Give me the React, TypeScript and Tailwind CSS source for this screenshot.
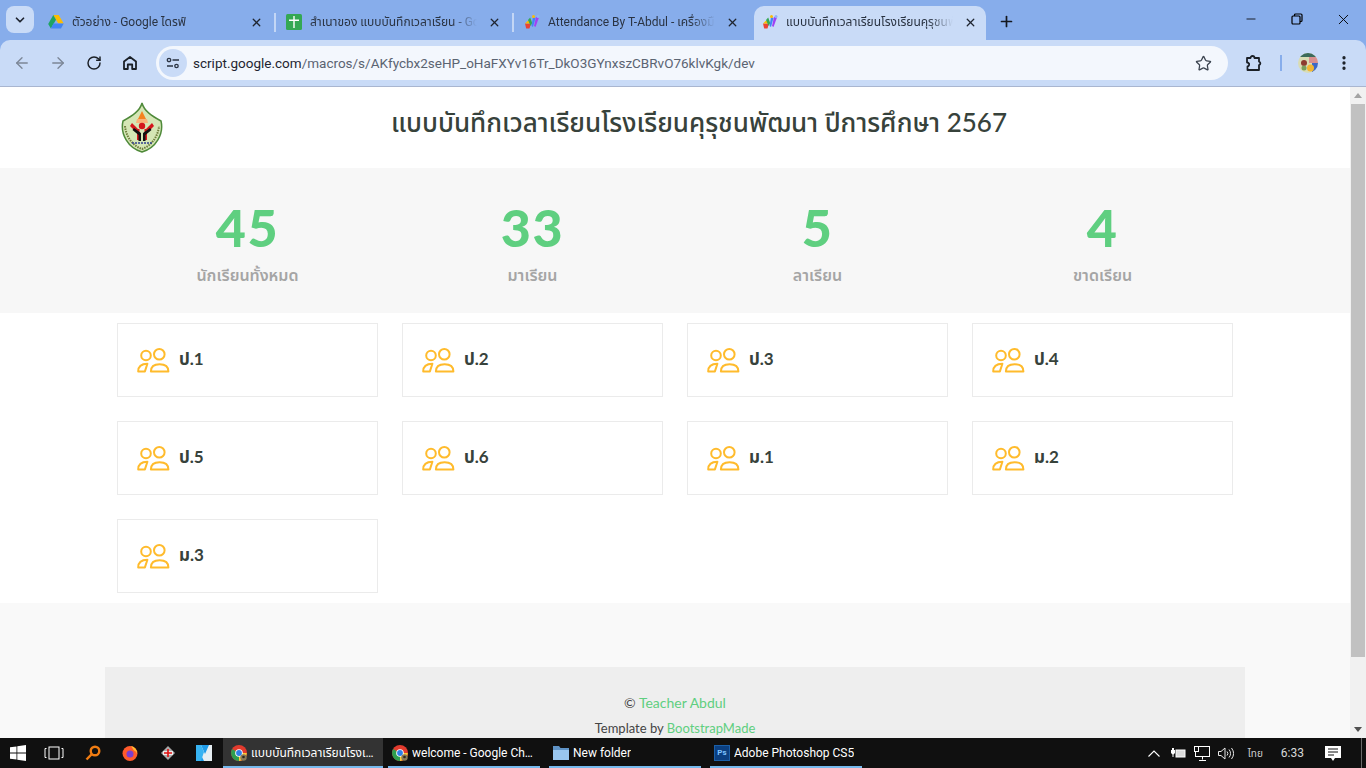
import { ArrowLeft, ArrowRight, RotateCw, Star, EllipsisVertical, Plus, X, ChevronDown, Minus } from 'lucide-react'

const UI_FONT = "font-['Roboto','Noto_Sans','Noto_Sans_Thai',sans-serif]"
const PAGE_FONT = "font-['Lato','Noto_Sans','Noto_Sans_Thai',sans-serif]"

function DriveIcon() {
  return (
    <svg width="16" height="16" viewBox="0 0 16 16">
      <path d="M5.300 1h5.400l5 8.600h-5.400z" fill="#fbbc04" />
      <path d="M5.300 1L0.200 10l2.700 4.600L8 5.700z" fill="#1fa463" />
      <path d="M5.400 9.600h10.300l-2.700 5H2.900z" fill="#4285f4" />
    </svg>
  )
}

function SheetIcon() {
  return (
    <svg width="16" height="16" viewBox="0 0 16 16">
      <rect width="16" height="16" rx="1.500" fill="#34a853" />
      <path d="M7.300 2h1.400v3.500H13v1.400H8.700V14H7.300V6.900H3V5.500h4.300z" fill="#fff" />
    </svg>
  )
}

function ScriptIcon() {
  return (
    <svg width="16" height="16" viewBox="0 0 16 16">
      <path d="M1 9.500h6l-1.500 5H2.200z" fill="#ea4335" />
      <path d="M1 9.500l3-3 3.500 3z" fill="#fbbc04" />
      <path d="M4 6l2.200-2.500 2 5.500-1.500 3z" fill="#34a853" />
      <path d="M9 3l2.500 1-2.500 9-1.500-1z" fill="#4285f4" />
      <path d="M12 3l3 .5-3.500 9.500-1.500-1z" fill="#a142f4" />
      <circle cx="9.500" cy="2.500" r="1.500" fill="#fbbc04" />
      <circle cx="14" cy="2.500" r="1.500" fill="#8ab4f8" />
    </svg>
  )
}

function ChromeIcon() {
  return (
    <svg width="16" height="16" viewBox="0 0 16 16">
      <circle cx="8" cy="8" r="8" fill="#e33b2e" />
      <path d="M8 8L1.100 4A8 8 0 0 0 8 16l3.500-6z" fill="#2e9e4f" />
      <path d="M8 8h7.800A8 8 0 0 1 8 16z" fill="#fcc934" />
      <circle cx="8" cy="8" r="3.800" fill="#fff" />
      <circle cx="8" cy="8" r="2.900" fill="#2f7fe6" />
      <circle cx="12.500" cy="12.500" r="3.200" fill="#8a7a55" />
      <circle cx="12.500" cy="12" r="1.300" fill="#2a2a20" />
    </svg>
  )
}

const tabs = [
  { title: 'ตัวอย่าง - Google ไดรฟ์', icon: <DriveIcon /> },
  { title: 'สำเนาของ แบบบันทึกเวลาเรียน - Google ชีต', icon: <SheetIcon /> },
  { title: 'Attendance By T-Abdul - เครื่องมือ', icon: <ScriptIcon /> },
  { title: 'แบบบันทึกเวลาเรียนโรงเรียนคุรุชนพัฒนา', icon: <ScriptIcon />, active: true },
]

function Tab({ title, icon, active, last }: { title: string; icon: React.ReactNode; active?: boolean; last?: boolean }) {
  return (
    <div className={`relative flex h-[34px] shrink-0 items-center pb-[2px] ${active ? 'ml-[2px] w-[232px] rounded-t-[10px] bg-[#c9dbf7] pl-[8px]' : 'w-[238px] pl-[10px]'}`}>
      <span className="shrink-0">{icon}</span>
      <span className="ml-2 min-w-0 flex-1 overflow-hidden whitespace-nowrap text-[12px] text-[#2a3342] [mask-image:linear-gradient(90deg,#000_85%,transparent)]">
        {title}
      </span>
      <X size={13} strokeWidth={2.400} className={`ml-[11px] shrink-0 text-[#1f2530] ${active ? 'mr-[9.500px]' : 'mr-[13.500px]'}`} />
      {!last && !active && <span className="absolute right-0 top-[7px] h-[19px] w-[2px] bg-[#c3d6f5]" />}
    </div>
  )
}

function TabStrip() {
  return (
    <div className={`flex h-10 items-end bg-[#87adeb] ${UI_FONT}`}>
      <div className="mb-[7px] ml-[6px] mr-[4px] flex h-[27px] w-[28px] items-center justify-center rounded-lg bg-[#c9dbf7]">
        <ChevronDown size={14} strokeWidth={3} className="text-[#1f2530]" />
      </div>
      {tabs.map((t, i) => (
        <Tab key={i} title={t.title} icon={t.icon} active={t.active} last={i === 2} />
      ))}
      <div className="mb-[10px] ml-[10px] flex w-5 items-center justify-center">
        <Plus size={17} strokeWidth={2.400} className="text-[#14181f]" />
      </div>
      <div className="ml-auto flex h-full items-center pb-[2px]">
        <div className="flex w-[46px] justify-center"><Minus size={14} strokeWidth={1.400} className="text-black" /></div>
        <div className="flex w-[46px] justify-center">
          <svg width="12" height="12" viewBox="0 0 12 12" fill="none" stroke="#000" strokeWidth="1.200">
            <rect x="1" y="3" width="8" height="8" rx="1" />
            <path d="M3.500 3V2a1 1 0 0 1 1-1H10a1 1 0 0 1 1 1v5.500a1 1 0 0 1-1 1H9" />
          </svg>
        </div>
        <div className="flex w-[46px] justify-center"><X size={17} strokeWidth={1.300} className="text-black" /></div>
      </div>
    </div>
  )
}

function Toolbar() {
  return (
    <div className="bg-[#87adeb]">
      <div className={`flex h-[47px] items-center rounded-t-[10px] border-b border-[#a9b6d0] bg-[#c9dbf7] ${UI_FONT}`}>
        <div className="flex w-[156px] items-center pl-[13px]">
          <ArrowLeft size={18} strokeWidth={1.800} className="text-[#7c8797]" />
          <ArrowRight size={18} strokeWidth={1.800} className="ml-[18px] text-[#7c8797]" />
          <RotateCw size={16} strokeWidth={2.200} className="ml-[19px] text-[#1b2027]" />
          <svg width="16" height="16" viewBox="0 0 16 16" fill="none" stroke="#1b2027" strokeWidth="1.800" className="ml-5">
            <path d="M2 14V6.500L8 2l6 4.500V14h-3.800V9.500H5.800V14z" strokeLinejoin="round" />
          </svg>
        </div>
        <div className="flex h-[34px] w-[1072px] items-center rounded-full bg-[#f3f7fd] pl-[3px] pr-4">
          <div className="flex h-7 w-7 items-center justify-center rounded-full bg-[#c9dbf7]">
            <svg width="14" height="12" viewBox="0 0 14 12" fill="none" stroke="#2a3342" strokeWidth="1.300">
              <circle cx="3" cy="3" r="1.700" />
              <path d="M6.500 3H13M1 9h6" />
              <circle cx="10.500" cy="9" r="1.700" />
            </svg>
          </div>
          <span className="ml-[6px] whitespace-nowrap pt-[1px] text-[13.500px] text-[#5b6472]">
            <span className="text-[#1f2530]">script.google.com</span>/macros/s/AKfycbx2seHP_oHaFXYv16Tr_DkO3GYnxszCBRvO76klvKgk/dev
          </span>
          <Star size={17} strokeWidth={1.800} className="ml-auto text-[#3c4450]" />
        </div>
        <svg width="18" height="18" viewBox="0 0 18 18" fill="none" stroke="#1b2027" strokeWidth="1.800" className="ml-[17px]" strokeLinejoin="round">
          <path d="M2 4h3.500a2 2 0 0 1 4 0H14v3.500a1.800 1.800 0 0 1 0 3.500v5H2.500v-3.500a2 2 0 0 0 1-3.500 2 2 0 0 0-1.500-.5z" />
        </svg>
        <span className="ml-[17px] h-[16px] w-[2px] bg-[#87adeb]" />
        <svg width="20" height="20" viewBox="0 0 20 20" className="ml-[16px]">
          <defs><clipPath id="av"><circle cx="10" cy="10" r="10" /></clipPath></defs>
          <g clipPath="url(#av)">
            <rect width="20" height="20" fill="#d9dcb4" />
            <rect width="20" height="4" fill="#3c6a5a" />
            <rect x="11" y="4" width="9" height="6" fill="#d98f8f" />
            <rect x="14" y="10" width="6" height="10" fill="#3c68c8" />
            <circle cx="12.500" cy="15" r="3.500" fill="#f2b632" />
            <circle cx="6" cy="10" r="3" fill="#8d3b2f" />
            <circle cx="6" cy="15" r="2.500" fill="#7ba05b" />
          </g>
        </svg>
        <EllipsisVertical size={18} strokeWidth={2.400} className="ml-[17px] text-[#1b2027]" />
      </div>
    </div>
  )
}

function SchoolLogo() {
  return (
    <svg width="44" height="52" viewBox="0 0 44 52">
      <path d="M22 1C24 9 32 14 41 19 44 32 36 46 22 50 8 46 0 32 3 19 12 14 20 9 22 1z" fill="#d5e6b5" stroke="#4f8a3a" strokeWidth="1.500" />
      <path d="M5 24C6 35 13 44 22 47 31 44 38 35 39 24" fill="none" stroke="#6f7d3c" strokeWidth="2" strokeDasharray="1.500 1" />
      <path d="M22 9l4 8h-8z" fill="#f58220" />
      <path d="M17 17h10l1 4H16z" fill="#f9b27a" />
      <circle cx="22" cy="24" r="3.200" fill="#d4161c" />
      <path d="M12 21l6 6h1.500v11H17V31l-7-7zM32 21l-6 6h-1.500v11H27V31l7-7z" fill="#d4161c" />
      <path d="M14 26l7 5v8h-2.500v-6l-6-5zM30 26l-7 5v8h2.500v-6l6-5z" fill="#111" />
      <path d="M12 41h20" stroke="#33418f" strokeWidth="1.400" strokeDasharray="2 1" />
    </svg>
  )
}

function Stat({ value, label }: { value: string; label: string }) {
  return (
    <div className="flex flex-col items-center">
      <span className="mt-[-2px] text-[52px] font-black leading-[60px] tracking-[1.500px] text-[#5fcf80]">{value}</span>
      <span className="mt-[3px] text-[16px] font-semibold leading-[30px] text-[#a5a5a5]">{label}</span>
    </div>
  )
}

function PeopleIcon() {
  return (
    <svg width="33" height="27" viewBox="0 0 33 27" fill="none" stroke="#ffbb2c" strokeWidth="2" strokeLinejoin="round" className="shrink-0">
      <circle cx="9" cy="8.500" r="4.800" />
      <circle cx="22.300" cy="7.200" r="5.300" />
      <path d="M1.200 24.400c0-4.500 3-7.700 9.200-7.700l-2.500 7.700z" />
      <path d="M13.900 24.400c0-4.700 3.400-7.200 8.700-7.200s8.800 2.500 8.800 7.200z" />
    </svg>
  )
}

const classes = ['ป.1', 'ป.2', 'ป.3', 'ป.4', 'ป.5', 'ป.6', 'ม.1', 'ม.2', 'ม.3']

function ClassCard({ name }: { name: string }) {
  return (
    <div className="flex h-[74px] items-center border border-[#ebebeb] bg-white pl-[19px]">
      <PeopleIcon />
      <span className="mb-[2px] ml-[9px] text-[17px] font-bold text-[#37423b]">{name}</span>
    </div>
  )
}

function Page() {
  return (
    <div className={`flex h-[651px] w-[1350px] flex-col overflow-hidden bg-[#f9f9f9] ${PAGE_FONT}`}>
      <header className="h-[81px] shrink-0 bg-white">
        <div className="mx-auto flex h-full w-[1116px] items-center">
          <div className="w-[50px] shrink-0 pl-[3px] pt-[1px]">
            <SchoolLogo />
          </div>
          <h1 className="mb-[10px] mr-[2px] flex-1 text-center text-[26px] font-medium text-[#37423b]">
            แบบบันทึกเวลาเรียนโรงเรียนคุรุชนพัฒนา ปีการศึกษา 2567
          </h1>
        </div>
      </header>
      <section className="h-[145px] shrink-0 bg-[#f7f7f7] pt-[31px]">
        <div className="mx-auto grid w-[1140px] grid-cols-4">
          <Stat value="45" label="นักเรียนทั้งหมด" />
          <Stat value="33" label="มาเรียน" />
          <Stat value="5" label="ลาเรียน" />
          <Stat value="4" label="ขาดเรียน" />
        </div>
      </section>
      <section className="shrink-0 bg-white py-[10px]">
        <div className="mx-auto grid w-[1116px] grid-cols-4 gap-6">
          {classes.map((c) => (
            <ClassCard key={c} name={c} />
          ))}
        </div>
      </section>
      <footer className="mx-auto mt-16 h-[120px] w-[1140px] shrink-0 bg-[#eeeeee] pt-[24px] text-center text-[14px] text-[#444444]">
        <div className="leading-[24px]">
          © <span className="text-[#5fcf80]">Teacher Abdul</span>
        </div>
        <div className="mt-[1px] text-[13px] leading-[24px]">
          Template by <span className="text-[#5fcf80]">BootstrapMade</span>
        </div>
      </footer>
    </div>
  )
}

function Scrollbar() {
  return (
    <div className="flex h-[651px] w-4 flex-col items-center bg-[#f1f1f1]">
      <div className="mt-[6px] h-0 w-0 border-x-[4px] border-b-[5px] border-x-transparent border-b-[#a3a3a3]" />
      <div className="mt-[6px] h-[553px] w-[14px] bg-[#c1c1c1]" />
      <div className="mb-[6px] mt-auto h-0 w-0 border-x-[4px] border-t-[5px] border-x-transparent border-t-[#505050]" />
    </div>
  )
}

function TaskItem({ icon, label, active, width }: { icon: React.ReactNode; label: string; active?: boolean; width: string }) {
  return (
    <div className={`flex h-full flex-col ${width} ${active ? 'bg-[#333333]' : ''}`}>
      <div className={`flex min-h-0 flex-1 items-center pt-[1px] ${active ? 'pl-2 pr-2' : 'pl-1 pr-1'}`}>
        <span className="shrink-0">{icon}</span>
        <span className="ml-[4px] min-w-0 truncate whitespace-nowrap text-[12px] text-white">{label}</span>
      </div>
      <div className="h-[2px] bg-[#76b9ed]" />
    </div>
  )
}

function Taskbar() {
  return (
    <div className={`flex h-[30px] items-center bg-[#101010] ${UI_FONT}`}>
      <div className="flex w-[223px] items-center">
        <svg width="16" height="16" viewBox="0 0 16 16" fill="#fff" className="ml-[10px]">
          <path d="M0 2.300l6.500-.9v6.200H0zM7.300 1.300L16 0v7.600H7.300zM0 8.400h6.500v6.200L0 13.700zM7.300 8.400H16V16l-8.700-1.300z" />
        </svg>
        <svg width="20" height="14" viewBox="0 0 20 14" fill="none" stroke="#fff" className="ml-[18px]">
          <rect x="5" y="1" width="10" height="12" />
          <path d="M2.500 2.500H1v9h1.500M17.500 2.500H19v9h-1.500" />
        </svg>
        <svg width="16" height="16" viewBox="0 0 16 16" fill="none" stroke="#f07c12" strokeWidth="2.400" className="ml-[21px]">
          <circle cx="10" cy="6" r="4.300" />
          <path d="M6.800 9.200L1.500 14.500" />
        </svg>
        <svg width="16" height="16" viewBox="0 0 16 16" className="ml-[21px]">
          <circle cx="8" cy="8.500" r="7.500" fill="#ff5a2c" />
          <path d="M9 1c4 1 6.500 4 6 8-.5-2-1.500-3-3-3.500z" fill="#ffbd2e" />
          <circle cx="8" cy="9" r="3.500" fill="#7b3fd0" />
        </svg>
        <svg width="16" height="16" viewBox="0 0 16 16" className="ml-[22px]">
          <path d="M8 1l7 7-7 7-7-7z" fill="#a8a8a8" />
          <rect x="3" y="6" width="10" height="4" fill="#e9e9e9" />
          <path d="M4 8h8M8 4v8" stroke="#e01010" strokeWidth="1.600" />
        </svg>
        <svg width="16" height="16" viewBox="0 0 16 16" className="ml-[20px]">
          <rect width="16" height="16" fill="#1f9be8" />
          <path d="M0 0l8 16h8V0h-3L9 9 5 0z" fill="#e6eef2" />
          <path d="M0 0h5l3 7-3 9H0z" fill="#37b3f2" />
        </svg>
      </div>
      <div className="flex h-full">
        <TaskItem width="w-[160px]" active icon={<ChromeIcon />} label="แบบบันทึกเวลาเรียนโรงเรียนคุรุชนพัฒนา" />
        <div className="w-[5px]" />
        <TaskItem width="w-[152px]" icon={<ChromeIcon />} label="welcome - Google Chrome" />
        <div className="w-[9px]" />
        <TaskItem width="w-[152px]" icon={
          <svg width="16" height="14" viewBox="0 0 16 14">
            <path d="M0 0h6l1.500 2H16v12H0z" fill="#5f93c6" />
            <rect y="4" width="16" height="10" fill="#9ac7ef" />
          </svg>
        } label="New folder" />
        <div className="w-[9px]" />
        <TaskItem width="w-[152px]" icon={
          <span className="flex h-4 w-4 items-center justify-center border border-[#1a5fa8] bg-[#0b3f80] text-[8px] font-bold text-[#7fc3ff]">Ps</span>
        } label="Adobe Photoshop CS5" />
      </div>
      <div className="ml-auto flex h-full items-center text-white">
        <svg width="12" height="7" viewBox="0 0 12 7" fill="none" stroke="#fff" strokeWidth="1.100"><path d="M.5 6.500L6 1l5.500 5.500" /></svg>
        <svg width="16" height="11" viewBox="0 0 16 11" className="ml-[10px]" fill="#fff">
          <path d="M2 0v2H1v3l1.500 1.500V9h1V6.500L5 5V2H4V0z" />
          <rect x="6" y="2" width="9" height="7" stroke="#fff" fill="#ddd" />
        </svg>
        <svg width="16" height="15" viewBox="0 0 16 15" fill="none" stroke="#fff" className="ml-[8px]">
          <rect x="1.500" y=".5" width="14" height="10" />
          <rect x=".5" y=".5" width="4" height="5" fill="#101010" />
          <path d="M8.500 10.500v3M5 14.500h7" />
        </svg>
        <svg width="16" height="13" viewBox="0 0 16 13" fill="none" stroke="#e8e8e8" className="ml-[8px]">
          <path d="M.5 4.500h2.500L7 1v11L3 8.500H.5z" />
          <path d="M9 4.500a3 3 0 0 1 0 4M11 2.500a6 6 0 0 1 0 8M13.500 1a9 9 0 0 1 0 11" />
        </svg>
        <span className="ml-[14px] text-[10px] text-[#cfcfcf]">ไทย</span>
        <span className="ml-[18px] text-[12px] text-[#d8d8d8]">6:33</span>
        <svg width="16" height="15" viewBox="0 0 16 15" className="ml-[21px]" fill="#fff">
          <path d="M0 0h16v12h-6l-2 3-2-3H0z" />
          <path d="M3 3h10M3 6h10M3 9h6" stroke="#101010" />
        </svg>
        <div className="ml-[20px] h-full w-[1px] bg-[#6a6a6a]" />
        <div className="w-[4px]" />
      </div>
    </div>
  )
}

export default function App() {
  return (
    <div className="flex h-[768px] w-[1366px] flex-col overflow-hidden">
      <TabStrip />
      <Toolbar />
      <div className="flex">
        <Page />
        <Scrollbar />
      </div>
      <Taskbar />
    </div>
  )
}
